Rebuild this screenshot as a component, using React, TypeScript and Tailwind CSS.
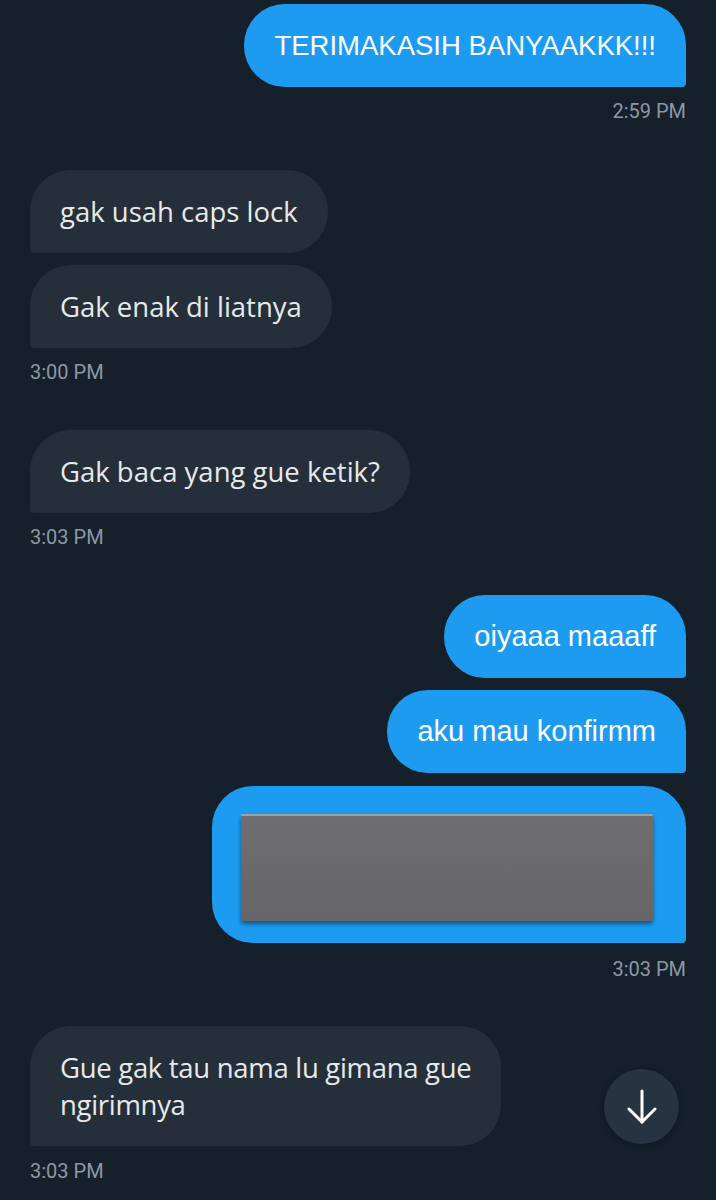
import { ReactNode } from 'react';

const sans = { fontFamily: 'Roboto, "Liberation Sans", Arial, sans-serif' };
const arial = { fontFamily: '"Liberation Sans", Arial, Helvetica, sans-serif' };
const segoe = { fontFamily: '"Open Sans", "Noto Sans", Arial, sans-serif' };

function Sent({ children, className = '' }: { children: ReactNode; className?: string }) {
  return (
    <div
      style={arial}
      className={`self-end bg-[#1d9bf0] text-white leading-[37px] py-[23px] px-[30px] rounded-[41px] rounded-br-[4px] ${className}`}
    >
      {children}
    </div>
  );
}

function Received({ children, className = '' }: { children: ReactNode; className?: string }) {
  return (
    <div
      style={segoe}
      className={`self-start bg-[#252f3a] text-[#e7e9ea] text-[27.5px] leading-[37px] py-[23px] px-[30px] rounded-[41px] rounded-bl-[4px] ${className}`}
    >
      {children}
    </div>
  );
}

function Time({ children, right, className = '' }: { children: ReactNode; right?: boolean; className?: string }) {
  return (
    <div
      style={sans}
      className={`${right ? 'self-end' : 'self-start'} text-[20px] leading-[24px] text-[#8b98a5] ${className}`}
    >
      {children}
    </div>
  );
}

export default function App() {
  return (
    <div className="relative w-[716px] h-[1200px] overflow-hidden bg-[#16202a]">
      <div className="flex flex-col px-[30px] pt-[4px]">
        <Sent className="text-[27.5px]">TERIMAKASIH BANYAAKKK!!!</Sent>
        <Time right className="mt-[12px]">2:59 PM</Time>

        <Received className="mt-[47px]">gak usah caps lock</Received>
        <Received className="mt-[12px]">Gak enak di liatnya</Received>
        <Time className="mt-[12px]">3:00 PM</Time>

        <Received className="mt-[46px]">Gak baca yang gue ketik?</Received>
        <Time className="mt-[12px]">3:03 PM</Time>

        <Sent className="mt-[46px] text-[29px]">oiyaaa maaaff</Sent>
        <Sent className="mt-[12px] text-[29px]">aku mau konfirmm</Sent>
        <div className="self-end mt-[13px] bg-[#1d9bf0] rounded-[41px] rounded-br-[4px] pl-[29px] pr-[33px] pt-[28px] pb-[22px]">
          <div className="w-[412px] h-[107px] rounded-[2px] bg-gradient-to-b from-[#6e6e70] to-[#666668] border-t-2 border-[#a0a0a2] shadow-[0_3px_4px_rgba(0,0,0,0.45)]" />
        </div>
        <Time right className="mt-[14px]">3:03 PM</Time>

        <Received className="mt-[45px] tracking-[-0.3px]">
          Gue gak tau nama lu gimana gue
          <br />
          ngirimnya
        </Received>
        <Time className="mt-[13px]">3:03 PM</Time>
      </div>

      <button className="absolute left-[604px] top-[1069px] w-[75px] h-[75px] rounded-full bg-[#263340] shadow-[0_1px_6px_rgba(0,0,0,0.35)] flex items-center justify-center">
        <svg width="30" height="35" viewBox="0 0 30 35" fill="none" stroke="white" strokeWidth="3" strokeLinecap="round" strokeLinejoin="round">
          <path d="M15 2v31" />
          <path d="M2 20l13 13 13-13" />
        </svg>
      </button>
    </div>
  );
}
